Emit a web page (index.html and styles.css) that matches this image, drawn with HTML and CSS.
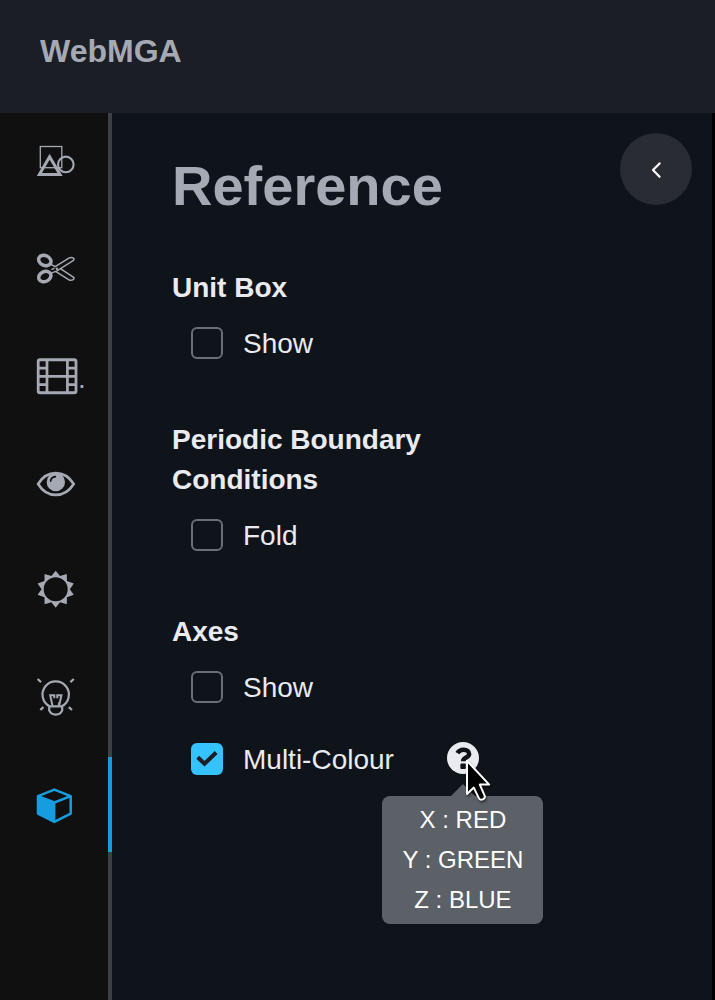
FILE: index.html
```html
<!DOCTYPE html>
<html lang="en">
<head>
<meta charset="utf-8">
<title>WebMGA</title>
<link rel="stylesheet" href="styles.css">
</head>
<body>
<header class="header">WebMGA</header>
<div class="body">
  <nav class="nav">
    <a class="nav-item"><svg class="nav-icon" viewBox="0 113 108 95">
      <rect x="40.3" y="146.5" width="21.5" height="21.2" stroke-width="1.3"/>
      <path d="M49.6 156.8L60 174.4H39.4Z" stroke-width="3"/>
      <circle cx="65.8" cy="164.4" r="7.8" stroke-width="2.1"/>
    </svg></a>
    <a class="nav-item"><svg class="nav-icon" viewBox="0 220.33 108 95">
      <ellipse cx="44.8" cy="260.8" rx="6.4" ry="4.9" transform="rotate(25 44.8 260.8)" stroke-width="3.5"/>
      <ellipse cx="44.8" cy="276.9" rx="6.4" ry="4.9" transform="rotate(-25 44.8 276.9)" stroke-width="3.5"/>
      <path d="M51 264.7L55.2 267L69.2 258.2Q72.5 257 74 259.1L73.6 260.7L57 271.2L51.2 273.5M51.5 270L54.5 268.5M60.8 269.2L74 277.9L73.6 279.6Q71 281.3 69 280.1L55.6 271.6" stroke-width="1.5"/>
      <circle class="solid" cx="56.9" cy="269.1" r="1.2"/>
    </svg></a>
    <a class="nav-item"><svg class="nav-icon" viewBox="0 327.67 108 95">
      <rect x="38.2" y="359.4" width="37.8" height="33" rx="1.8" stroke-width="2.8"/>
      <path d="M47 359V393M67.4 359V393M47 376H67.4M38 367.7H47M38 376H47M38 384.3H47M67.4 367.7H76M67.4 376H76M67.4 384.3H76" stroke-width="2.7"/>
      <text class="nav-dot" x="78" y="388">.</text>
    </svg></a>
    <a class="nav-item"><svg class="nav-icon" viewBox="0 435 108 95">
      <path d="M38.1 484C47 469.6 64.5 469.6 73.7 484C64.5 498.6 47 498.6 38.1 484Z" stroke-width="2.7"/>
      <circle class="solid" cx="55.8" cy="482" r="9.2"/>
      <path class="cut" d="M50.6 481.3Q50.8 477.2 55.4 476.6" stroke-width="1.6"/>
    </svg></a>
    <a class="nav-item"><svg class="nav-icon" viewBox="0 542.33 108 95">
      <path class="solid" fill-rule="evenodd" d="M55.7 571L60 576.3L66.8 574.3L66.9 581.3L73.8 583.8L69.8 589.5L73.8 595.2L66.9 597.7L66.8 604.7L60 602.7L55.7 608L51.4 602.7L44.6 604.7L44.5 597.7L37.6 595.2L41.6 589.5L37.6 583.8L44.5 581.3L44.6 574.3L51.4 576.3ZM55.7 577.5A12 12 0 1 0 55.7 601.5A12 12 0 1 0 55.7 577.5Z"/>
    </svg></a>
    <a class="nav-item"><svg class="nav-icon" viewBox="0 649.67 108 95">
      <g stroke-width="2.2">
        <path d="M49.6 706A13.2 13.2 0 1 1 61.8 706Z"/>
        <path d="M49.2 706.5V710Q51 714.2 55.7 714.2Q60.5 714.2 62.2 710V706.5"/>
        <path d="M52.6 706L50.2 694.8H54.3V698M59 706L61.4 694.8H57.3V698M59.2 702L58.6 706" stroke-width="2"/>
        <path d="M37.6 678.7L41 681.8M73.8 678.7L70.4 681.8M40.3 709.7L43.4 706.8M72 709.7L68.8 706.8"/>
      </g>
    </svg></a>
    <a class="nav-item active"><svg class="nav-icon" viewBox="0 757 108 95">
      <path d="M54.3 789.6L70.7 796.1V813.6L54.3 821.9L38 813.6V796.1ZM38 796.1L54.3 802.5L70.7 796.1" stroke-width="2.5" stroke-linejoin="round"/>
      <path class="solid" d="M38 796.1L55.4 802.5V822L38 813.6Z"/>
    </svg></a>
  </nav>
  <main class="panel">
    <button class="collapse" aria-label="Collapse"><svg width="72" height="72"><path d="M39.6 30.4L33 37.1L39.6 43.8"/></svg></button>
    <h1 class="title">Reference</h1>
    <section class="group">
      <h2 class="label">Unit Box</h2>
      <div class="row"><span class="box"></span>Show</div>
    </section>
    <section class="group">
      <h2 class="label">Periodic Boundary Conditions</h2>
      <div class="row"><span class="box"></span>Fold</div>
    </section>
    <section class="group">
      <h2 class="label">Axes</h2>
      <div class="row"><span class="box"></span>Show</div>
      <div class="row"><span class="box checked"><svg width="32" height="32"><path d="M6.7 14.2L13.5 20.8L25.2 9.5"/></svg></span>Multi-Colour
        <span class="help">
          <svg width="32" height="32"><circle cx="16" cy="16" r="16"/><path d="M10.4 11.2C11.8 8.8 14 7.8 16.8 7.8C20 7.8 22.1 9.5 22.1 12C22.1 15.8 16.2 15.2 16.2 19.2"/><rect x="13.4" y="21.6" width="5.4" height="5.4" rx="1"/></svg>
          <span class="tooltip">X : RED<br>Y : GREEN<br>Z : BLUE</span>
          <svg class="cursor" width="34" height="50" viewBox="0 0 34 50"><path d="M4 2.8V36L10.8 29.6L15.6 39.6C17.3 43.6 23 41.2 21.5 37.3L16.8 26.6H26.2Z"/></svg>
        </span>
      </div>
    </section>
  </main>
</div>
</body>
</html>
```
FILE: styles.css
```css
* { box-sizing: border-box; }
body {
  margin: 0;
  height: 1000px;
  overflow: hidden;
  background: #000;
  color: #e9ebf0;
  font: 28px/40px "Liberation Sans", Arial, sans-serif;
}
.header {
  height: 113px;
  padding: 31px 40px;
  background: #1c1e26;
  color: #a4a9b3;
  font-size: 32px;
  font-weight: bold;
}
.body { display: flex; height: 887px; }
.nav {
  display: flex;
  flex-direction: column;
  gap: 12.333px;
  width: 112px;
  background: linear-gradient(to right, #101010 108px, #3c3f43 108px);
  color: #a4a9b3;
}
.nav-item { display: block; height: 95px; flex: none; }
.nav-item.active { color: #169de0; border-right: 4px solid #169de0; }
.nav-icon {
  display: block;
  width: 108px;
  height: 95px;
  fill: none;
  stroke: currentColor;
}
.nav-icon .solid { fill: currentColor; stroke: none; }
.nav-icon .cut { stroke: #101010; stroke-linecap: round; }
.nav-dot { fill: currentColor; stroke: none; font-size: 28px; }
.panel {
  position: relative;
  width: 600px;
  padding: 33px 60px 0;
  background: #0f131a;
}
.collapse {
  position: absolute;
  top: 20px;
  right: 20px;
  width: 72px;
  height: 72px;
  padding: 0;
  border: 0;
  border-radius: 50%;
  background: #292d33;
}
.collapse svg { display: block; fill: none; stroke: #fff; stroke-width: 2.2; stroke-linecap: round; stroke-linejoin: round; }
.title {
  margin: 0 0 42px;
  color: #a4a9b3;
  font-size: 56px;
  line-height: 80px;
}
.group { margin-bottom: 40px; }
.label { width: 300px; margin: 0; font-size: 28px; line-height: 40px; }
.row { display: flex; height: 72px; padding: 16px 0 0 19px; }
.box {
  width: 32px;
  height: 32px;
  margin: 3px 20px 0 0;
  border: 2px solid #6a6f76;
  border-radius: 6px;
}
.box.checked { border: 0; background: #34c3ff; }
.box svg { display: block; fill: none; stroke: #1c1e26; stroke-width: 4; }
.help { position: relative; width: 32px; height: 32px; margin: 2px 0 0 53px; }
.help > svg { display: block; fill: #e9ebf0; }
.help > svg rect { fill: #0f131a; }
.help > svg path { fill: none; stroke: #0f131a; stroke-width: 4.6; }
.tooltip {
  position: absolute;
  top: 54px;
  left: -65px;
  width: 161px;
  height: 128px;
  padding: 4px 0 4px 1px;
  border-radius: 8px;
  background: #5c6067;
  color: #fff;
  font-size: 24px;
  text-align: center;
}
.tooltip::before {
  content: "";
  position: absolute;
  top: -12px;
  left: 69px;
  border: 12px solid transparent;
  border-top: 0;
  border-bottom-color: #5c6067;
}
.help > .cursor { position: absolute; top: 16px; left: 16px; filter: drop-shadow(1px 2px 1px rgba(0, 0, 0, .5)); }
.help > .cursor path { fill: #000; stroke: #fff; stroke-width: 2; stroke-linejoin: round; }
```
